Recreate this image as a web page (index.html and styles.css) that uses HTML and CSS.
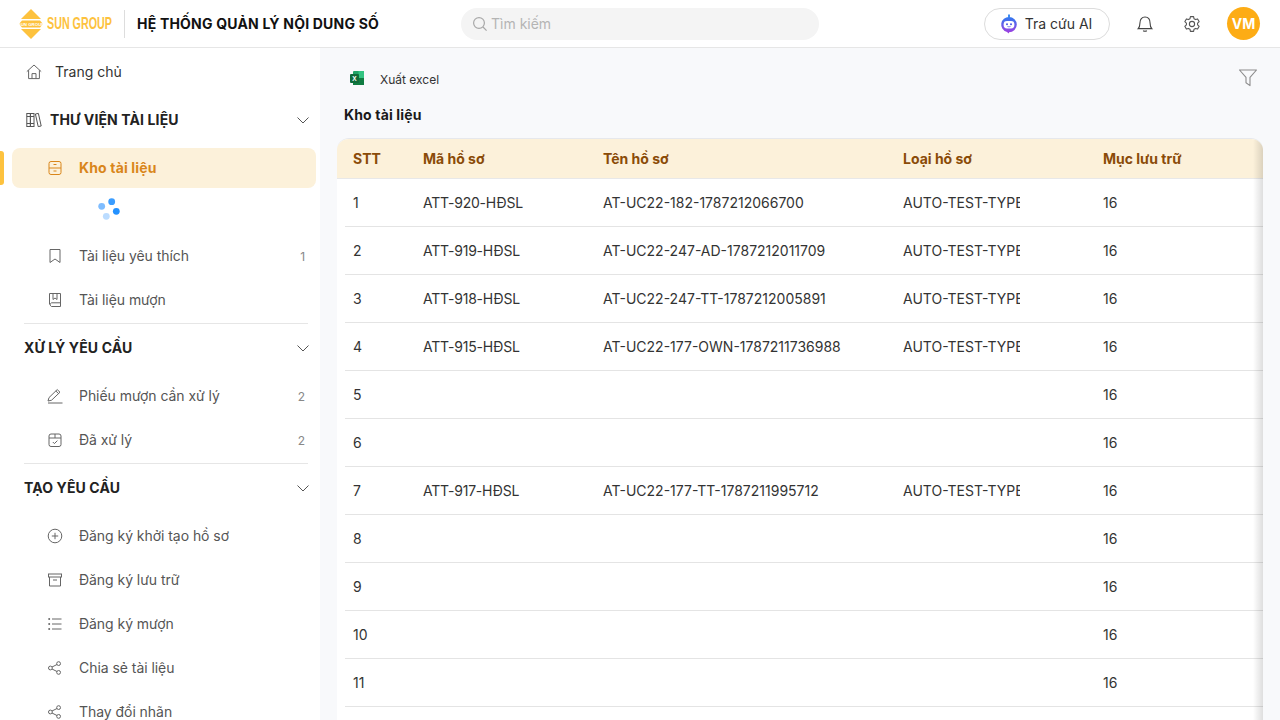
FILE: index.html
```html
<!DOCTYPE html>
<html lang="vi">
<head>
  <meta charset="UTF-8" />
  <title>Hệ thống quản lý nội dung số</title>
  <link rel="stylesheet" href="styles.css">
</head>
<body>
  <header class="topbar">
    <div class="logo">
      <svg class="logo-mark" width="26" height="30" viewBox="0 0 26 30">
        <path d="M13 0 L23 10 H3 Z" fill="#fdc23e"/>
        <path d="M13 30 L23 20 H3 Z" fill="#fdc23e"/>
        <path d="M4 11.5 H22 L25 15 L22 18.5 H4 L1 15 Z" fill="#fdc23e"/>
        <text x="13" y="16.6" font-size="4.4" font-weight="700" text-anchor="middle" fill="#fff" font-family="Liberation Sans">SUN GROUP</text>
      </svg>
      <span class="logo-text">SUN GROUP</span>
    </div>
    <div class="top-sep"></div>
    <div class="app-title">HỆ THỐNG QUẢN LÝ NỘI DUNG SỐ</div>
    <div class="search">
      <svg width="16" height="16" viewBox="0 0 16 16" fill="none" stroke="#a8a8a8" stroke-width="1.2">
        <circle cx="7" cy="7" r="5.4"/>
        <path d="M11 11 L14.6 14.6"/>
      </svg>
      <span>Tìm kiếm</span>
    </div>
    <button class="ai-btn">
      <svg width="18" height="20" viewBox="0 0 18 20">
        <defs>
          <linearGradient id="botGrad" x1="0" y1="0" x2="0" y2="1">
            <stop offset="0" stop-color="#2f7bf0"/>
            <stop offset="1" stop-color="#a53be0"/>
          </linearGradient>
        </defs>
        <rect x="8" y="0.5" width="2" height="3" fill="#3d8cf2"/>
        <path d="M9 3 A7.8 7.6 0 0 1 9 18.2 L9 19.6 L6.5 17.8 A7.8 7.6 0 0 1 9 3 Z" fill="url(#botGrad)"/>
        <rect x="3.6" y="7" width="10.8" height="7.4" rx="3.4" fill="#fff"/>
        <circle cx="7" cy="10.2" r="1" fill="#4b55e8"/>
        <circle cx="11" cy="10.2" r="1" fill="#4b55e8"/>
        <path d="M7.4 12.4 Q9 13.4 10.6 12.4" stroke="#4b55e8" stroke-width="0.7" fill="none"/>
      </svg>
      Tra cứu AI
    </button>
    <div class="top-icon bell">
      <svg width="18" height="18" viewBox="0 0 18 18" fill="none" stroke="#444" stroke-width="1.1">
        <path d="M2.2 13.6 C3.6 12.2 3.9 10.8 3.9 8.2 C3.9 4.4 6 2 9 2 C12 2 14.1 4.4 14.1 8.2 C14.1 10.8 14.4 12.2 15.8 13.6 Z"/>
        <path d="M7.2 15.6 C8 16.5 10 16.5 10.8 15.6"/>
      </svg>
    </div>
    <div class="top-icon gear">
      <svg width="18" height="18" viewBox="0 0 18 18" fill="none" stroke="#555" stroke-width="1.1">
        <path d="M7.4 1.6 H10.6 L11 3.7 L12.6 4.6 L14.6 3.9 L16.2 6.7 L14.6 8.1 V9.9 L16.2 11.3 L14.6 14.1 L12.6 13.4 L11 14.3 L10.6 16.4 H7.4 L7 14.3 L5.4 13.4 L3.4 14.1 L1.8 11.3 L3.4 9.9 V8.1 L1.8 6.7 L3.4 3.9 L5.4 4.6 L7 3.7 Z" stroke-linejoin="round"/>
        <circle cx="9" cy="9" r="2.6"/>
      </svg>
    </div>
    <div class="avatar">VM</div>
  </header>

  <div class="layout">
    <aside class="sidebar">
      <div class="home-row">
        <svg width="16" height="16" viewBox="0 0 16 16" fill="none" stroke="#666" stroke-width="1">
          <path d="M0.8 7.6 L8 1 L15.2 7.6"/>
          <path d="M2.6 6.2 V14.6 H13.4 V6.2"/>
          <path d="M6 14.6 V9.6 H10 V14.6"/>
        </svg>
        <span>Trang chủ</span>
      </div>

      <section class="group">
        <div class="group-head">
          <svg class="group-icon" width="16" height="16" viewBox="0 0 16 16" fill="none" stroke="#555" stroke-width="1">
            <rect x="0.8" y="1.5" width="3.6" height="13"/>
            <rect x="4.4" y="1.5" width="3.6" height="13"/>
            <path d="M0.8 4.5 H8 M0.8 11.5 H8"/>
            <path d="M9.4 2 L12.4 1.4 L15.2 14 L12.2 14.6 Z"/>
          </svg>
          <span>THƯ VIỆN TÀI LIỆU</span>
          <svg class="chev" width="12" height="12" viewBox="0 0 12 12" fill="none" stroke="#555" stroke-width="1"><path d="M0.5 3.5 L6 9 L11.5 3.5"/></svg>
        </div>
        <div class="items">
          <a class="item active">
            <svg width="16" height="16" viewBox="0 0 16 16" fill="none" stroke="#d9861a" stroke-width="1">
              <rect x="2" y="1.5" width="12" height="13" rx="2"/>
              <path d="M2 8 H14 M6.5 4.5 H9.5 M6.5 11 H9.5"/>
            </svg>
            <span>Kho tài liệu</span>
          </a>
          <div class="loading">
            <svg width="24" height="24" viewBox="0 0 24 24">
              <circle cx="14.7" cy="5.7" r="3.4" fill="#3b9dff"/>
              <circle cx="19.3" cy="15.3" r="3.4" fill="#2391ff"/>
              <circle cx="9.3" cy="20.3" r="3.4" fill="#bbdcff"/>
              <circle cx="4.7" cy="10.3" r="3.4" fill="#7fbdff"/>
            </svg>
          </div>
          <a class="item">
            <svg width="16" height="16" viewBox="0 0 16 16" fill="none" stroke="#666" stroke-width="1">
              <path d="M3 1.5 H13 V14.5 L8 11 L3 14.5 Z"/>
            </svg>
            <span>Tài liệu yêu thích</span>
            <em>1</em>
          </a>
          <a class="item">
            <svg width="16" height="16" viewBox="0 0 16 16" fill="none" stroke="#666" stroke-width="1">
              <path d="M2.5 12.5 V1.5 H13.5 V14.5 H4.5 A2 2 0 0 1 4.5 10.8 H13.5"/>
              <path d="M6 1.5 V7.5 L8 6 L10 7.5 V1.5"/>
            </svg>
            <span>Tài liệu mượn</span>
          </a>
        </div>
      </section>

      <section class="group">
        <div class="group-head">
          <span>XỬ LÝ YÊU CẦU</span>
          <svg class="chev" width="12" height="12" viewBox="0 0 12 12" fill="none" stroke="#555" stroke-width="1"><path d="M0.5 3.5 L6 9 L11.5 3.5"/></svg>
        </div>
        <div class="items">
          <a class="item">
            <svg width="16" height="16" viewBox="0 0 16 16" fill="none" stroke="#666" stroke-width="1">
              <path d="M1 13 L2 9.6 L10.2 1.6 L13 4.2 L4.6 12.2 Z"/>
              <path d="M8.8 3 L11.6 5.6"/>
              <path d="M1 15 H15.5"/>
            </svg>
            <span>Phiếu mượn cần xử lý</span>
            <em>2</em>
          </a>
          <a class="item">
            <svg width="16" height="16" viewBox="0 0 16 16" fill="none" stroke="#666" stroke-width="1">
              <rect x="2" y="2" width="12" height="12.5" rx="2"/>
              <path d="M2 6 H14 M8 2 V6"/>
              <path d="M5.8 10 L7.4 11.6 L10.4 8.6"/>
            </svg>
            <span>Đã xử lý</span>
            <em>2</em>
          </a>
        </div>
      </section>

      <section class="group last">
        <div class="group-head">
          <span>TẠO YÊU CẦU</span>
          <svg class="chev" width="12" height="12" viewBox="0 0 12 12" fill="none" stroke="#555" stroke-width="1"><path d="M0.5 3.5 L6 9 L11.5 3.5"/></svg>
        </div>
        <div class="items">
          <a class="item">
            <svg width="16" height="16" viewBox="0 0 16 16" fill="none" stroke="#666" stroke-width="1">
              <circle cx="8" cy="8" r="6.8"/>
              <path d="M8 4.8 V11.2 M4.8 8 H11.2"/>
            </svg>
            <span>Đăng ký khởi tạo hồ sơ</span>
          </a>
          <a class="item">
            <svg width="16" height="16" viewBox="0 0 16 16" fill="none" stroke="#666" stroke-width="1">
              <rect x="1.5" y="2" width="13" height="3"/>
              <path d="M2.5 5 V14 H13.5 V5"/>
              <path d="M6 8 H10"/>
            </svg>
            <span>Đăng ký lưu trữ</span>
          </a>
          <a class="item">
            <svg width="16" height="16" viewBox="0 0 16 16" fill="none" stroke="#666" stroke-width="1">
              <path d="M5 3 H14.5 M5 8 H14.5 M5 13 H14.5"/>
              <circle cx="2.2" cy="3" r="1" fill="#666" stroke="none"/>
              <circle cx="2.2" cy="8" r="1" fill="#666" stroke="none"/>
              <circle cx="2.2" cy="13" r="1" fill="#666" stroke="none"/>
            </svg>
            <span>Đăng ký mượn</span>
          </a>
          <a class="item">
            <svg width="16" height="16" viewBox="0 0 16 16" fill="none" stroke="#666" stroke-width="1">
              <circle cx="3.4" cy="8" r="1.9"/>
              <circle cx="11.6" cy="3.6" r="1.9"/>
              <circle cx="11.6" cy="12.4" r="1.9"/>
              <path d="M5 7 L10 4.5 M5 9 L10 11.5"/>
            </svg>
            <span>Chia sẻ tài liệu</span>
          </a>
          <a class="item">
            <svg width="16" height="16" viewBox="0 0 16 16" fill="none" stroke="#666" stroke-width="1">
              <circle cx="3.4" cy="8" r="1.9"/>
              <circle cx="11.6" cy="3.6" r="1.9"/>
              <circle cx="11.6" cy="12.4" r="1.9"/>
              <path d="M5 7 L10 4.5 M5 9 L10 11.5"/>
            </svg>
            <span>Thay đổi nhãn</span>
          </a>
        </div>
      </section>
    </aside>

    <main class="content">
      <div class="toolbar">
        <svg class="excel" width="16" height="16" viewBox="0 0 16 16">
          <rect x="4" y="1" width="11" height="14" rx="1" fill="#21a366"/>
          <rect x="9.5" y="1" width="5.5" height="7" fill="#33c481"/>
          <rect x="4" y="8" width="11" height="7" fill="#107c41"/>
          <rect x="1" y="4" width="9" height="9" rx="1" fill="#0f6b3a"/>
          <text x="5.5" y="10.8" font-size="6.5" font-weight="700" text-anchor="middle" fill="#fff" font-family="Liberation Sans">X</text>
        </svg>
        <span class="export">Xuất excel</span>
        <svg class="filter" width="20" height="18" viewBox="0 0 20 18" fill="none" stroke="#8c8c8c" stroke-width="1.1">
          <path d="M1.5 1 H18.5 L12 8.4 V16.6 L8 13.8 V8.4 Z" stroke-linejoin="round"/>
        </svg>
      </div>
      <h2 class="page-title">Kho tài liệu</h2>

      <div class="table-card">
        <div class="thead">
          <div>STT</div>
          <div>Mã hồ sơ</div>
          <div>Tên hồ sơ</div>
          <div>Loại hồ sơ</div>
          <div>Mục lưu trữ</div>
        </div>
        <div class="trow"><div>1</div><div class="code">ATT-920-HĐSL</div><div>AT-UC22-182-1787212066700</div><div class="clip">AUTO-TEST-TYPE</div><div>16</div></div>
        <div class="trow"><div>2</div><div class="code">ATT-919-HĐSL</div><div>AT-UC22-247-AD-1787212011709</div><div class="clip">AUTO-TEST-TYPE</div><div>16</div></div>
        <div class="trow"><div>3</div><div class="code">ATT-918-HĐSL</div><div>AT-UC22-247-TT-1787212005891</div><div class="clip">AUTO-TEST-TYPE</div><div>16</div></div>
        <div class="trow"><div>4</div><div class="code">ATT-915-HĐSL</div><div>AT-UC22-177-OWN-1787211736988</div><div class="clip">AUTO-TEST-TYPE</div><div>16</div></div>
        <div class="trow"><div>5</div><div></div><div></div><div></div><div>16</div></div>
        <div class="trow"><div>6</div><div></div><div></div><div></div><div>16</div></div>
        <div class="trow"><div>7</div><div class="code">ATT-917-HĐSL</div><div>AT-UC22-177-TT-1787211995712</div><div class="clip">AUTO-TEST-TYPE</div><div>16</div></div>
        <div class="trow"><div>8</div><div></div><div></div><div></div><div>16</div></div>
        <div class="trow"><div>9</div><div></div><div></div><div></div><div>16</div></div>
        <div class="trow"><div>10</div><div></div><div></div><div></div><div>16</div></div>
        <div class="trow"><div>11</div><div></div><div></div><div></div><div>16</div></div>
        <div class="trow"><div></div><div></div><div></div><div></div><div></div></div>
      </div>
    </main>
  </div>
</body>
</html>
```
FILE: styles.css
```css
* {
  box-sizing: border-box;
}
html, body {
  height: 100%;
}
body {
  margin: 0;
  overflow: hidden;
  font-family: Inter, "Liberation Sans", sans-serif;
  font-size: 14px;
  color: #333;
  background: #fff;
}
.topbar {
  height: 48px;
  display: flex;
  align-items: center;
  padding: 0 20px 0 18px;
  border-bottom: 1px solid #e6e6e6;
  background: #fff;
}
.logo {
  display: flex;
  align-items: center;
  width: 106px;
  overflow: hidden;
}
.logo-mark {
  flex: none;
}
.logo-text {
  flex: none;
  margin-left: 3px;
  font-family: "Liberation Sans", sans-serif;
  font-size: 16.5px;
  font-weight: 700;
  color: #fdc23e;
  white-space: nowrap;
  transform: scaleX(0.65);
  transform-origin: left center;
}
.top-sep {
  width: 1px;
  height: 28px;
  background: #ddd;
}
.app-title {
  margin-left: 12px;
  width: 324px;
  font-size: 14px;
  font-weight: 700;
  letter-spacing: 0.2px;
  color: #111;
  white-space: nowrap;
}
.search {
  width: 358px;
  height: 32px;
  display: flex;
  align-items: center;
  gap: 3px;
  padding-left: 11px;
  background: #f4f4f4;
  border-radius: 16px;
  color: #b4b4b4;
}
.ai-btn {
  margin-left: 165px;
  width: 126px;
  height: 32px;
  display: flex;
  align-items: center;
  justify-content: center;
  gap: 7px;
  padding: 0 8px 0 6px;
  border: 1px solid #dcdcdc;
  border-radius: 16px;
  background: #fff;
  font-family: inherit;
  font-size: 14px;
  color: #333;
}
.top-icon {
  width: 18px;
  height: 18px;
  display: flex;
}
.bell {
  margin-left: 26px;
}
.gear {
  margin-left: 29px;
}
.avatar {
  margin-left: 26px;
  width: 33px;
  height: 33px;
  border-radius: 50%;
  background: #fdac15;
  color: #fff;
  font-weight: 700;
  display: flex;
  align-items: center;
  justify-content: center;
}

.layout {
  display: flex;
  height: 672px;
}
.sidebar {
  width: 320px;
  flex: none;
  overflow: hidden;
  background: #fff;
}
.home-row {
  height: 48px;
  display: flex;
  align-items: center;
  gap: 13px;
  padding-left: 26px;
  color: #333;
}
.home-row span, .group-head span, .item span {
  margin-bottom: 2px;
}
.group {
  margin: 0 12px 0 24px;
  padding-bottom: 1px;
  border-bottom: 1px solid #e6e6e6;
}
.group.last {
  border-bottom: none;
}
.group-head {
  height: 48px;
  display: flex;
  align-items: center;
  font-weight: 700;
  letter-spacing: 0.12px;
  color: #222;
}
.group-icon {
  margin: 0 8px 0 2px;
}
.chev {
  margin-left: auto;
  margin-right: -1px;
}
.items {
  margin-top: 2px;
  margin-left: -12px;
  margin-right: -8px;
}
.group:first-of-type .items {
  margin-top: 4px;
}
.item {
  height: 44px;
  display: flex;
  align-items: center;
  gap: 16px;
  padding: 0 11px 0 35px;
  letter-spacing: -0.05px;
  color: #555;
}
.item em {
  margin-left: auto;
  font-style: normal;
  font-size: 12px;
  color: #888;
}
.item.active {
  position: relative;
  height: 40px;
  border-radius: 8px;
  background: #fcf1da;
  color: #d9861a;
  font-weight: 700;
  letter-spacing: 0.15px;
}
.item.active::before {
  content: "";
  position: absolute;
  left: -12px;
  top: 3px;
  width: 4px;
  height: 34px;
  border-radius: 0 3px 3px 0;
  background: #fdc23e;
}
.loading {
  height: 46px;
  padding: 8px 0 0 85px;
}

.content {
  flex: 1;
  min-width: 0;
  background: #f8f9fb;
  padding: 0 17px;
  overflow: hidden;
}
.toolbar {
  height: 62px;
  display: flex;
  align-items: center;
  padding-left: 12px;
}
.excel {
  margin-bottom: 2px;
}
.export {
  margin-left: 15px;
  font-size: 12px;
  color: #333;
}
.filter {
  margin-left: auto;
  margin-right: 5px;
  margin-bottom: 2px;
}
.page-title {
  margin: 0;
  height: 28px;
  padding: 0 0 0 7px;
  font-size: 14px;
  font-weight: 700;
  letter-spacing: 0.15px;
  line-height: 10px;
  color: #1a1a1a;
}
.table-card {
  position: relative;
  background: #fff;
  border-radius: 12px 12px 0 0;
  border-top: 1px solid #e6e8ec;
  overflow: hidden;
}
.table-card::after {
  content: "";
  position: absolute;
  top: 0;
  right: 0;
  bottom: 0;
  width: 10px;
  background: linear-gradient(to right, rgba(0, 0, 0, 0), rgba(0, 0, 0, 0.13));
}
.thead, .trow {
  display: grid;
  align-items: center;
}
.thead {
  grid-template-columns: 70px 180px 300px 200px 1fr;
  height: 40px;
  padding-left: 16px;
  background: #fcf1da;
  border-bottom: 1px solid #e8e8e8;
  color: #8a4b08;
  font-weight: 700;
}
.trow {
  grid-template-columns: 70px 180px 300px 200px 1fr;
  height: 48px;
  margin-left: 8px;
  padding-left: 8px;
  border-bottom: 1px solid #e4e4e4;
  color: #333;
}
.code {
  letter-spacing: -0.2px;
}
.clip {
  width: 117px;
  overflow: hidden;
  white-space: nowrap;
}
```
